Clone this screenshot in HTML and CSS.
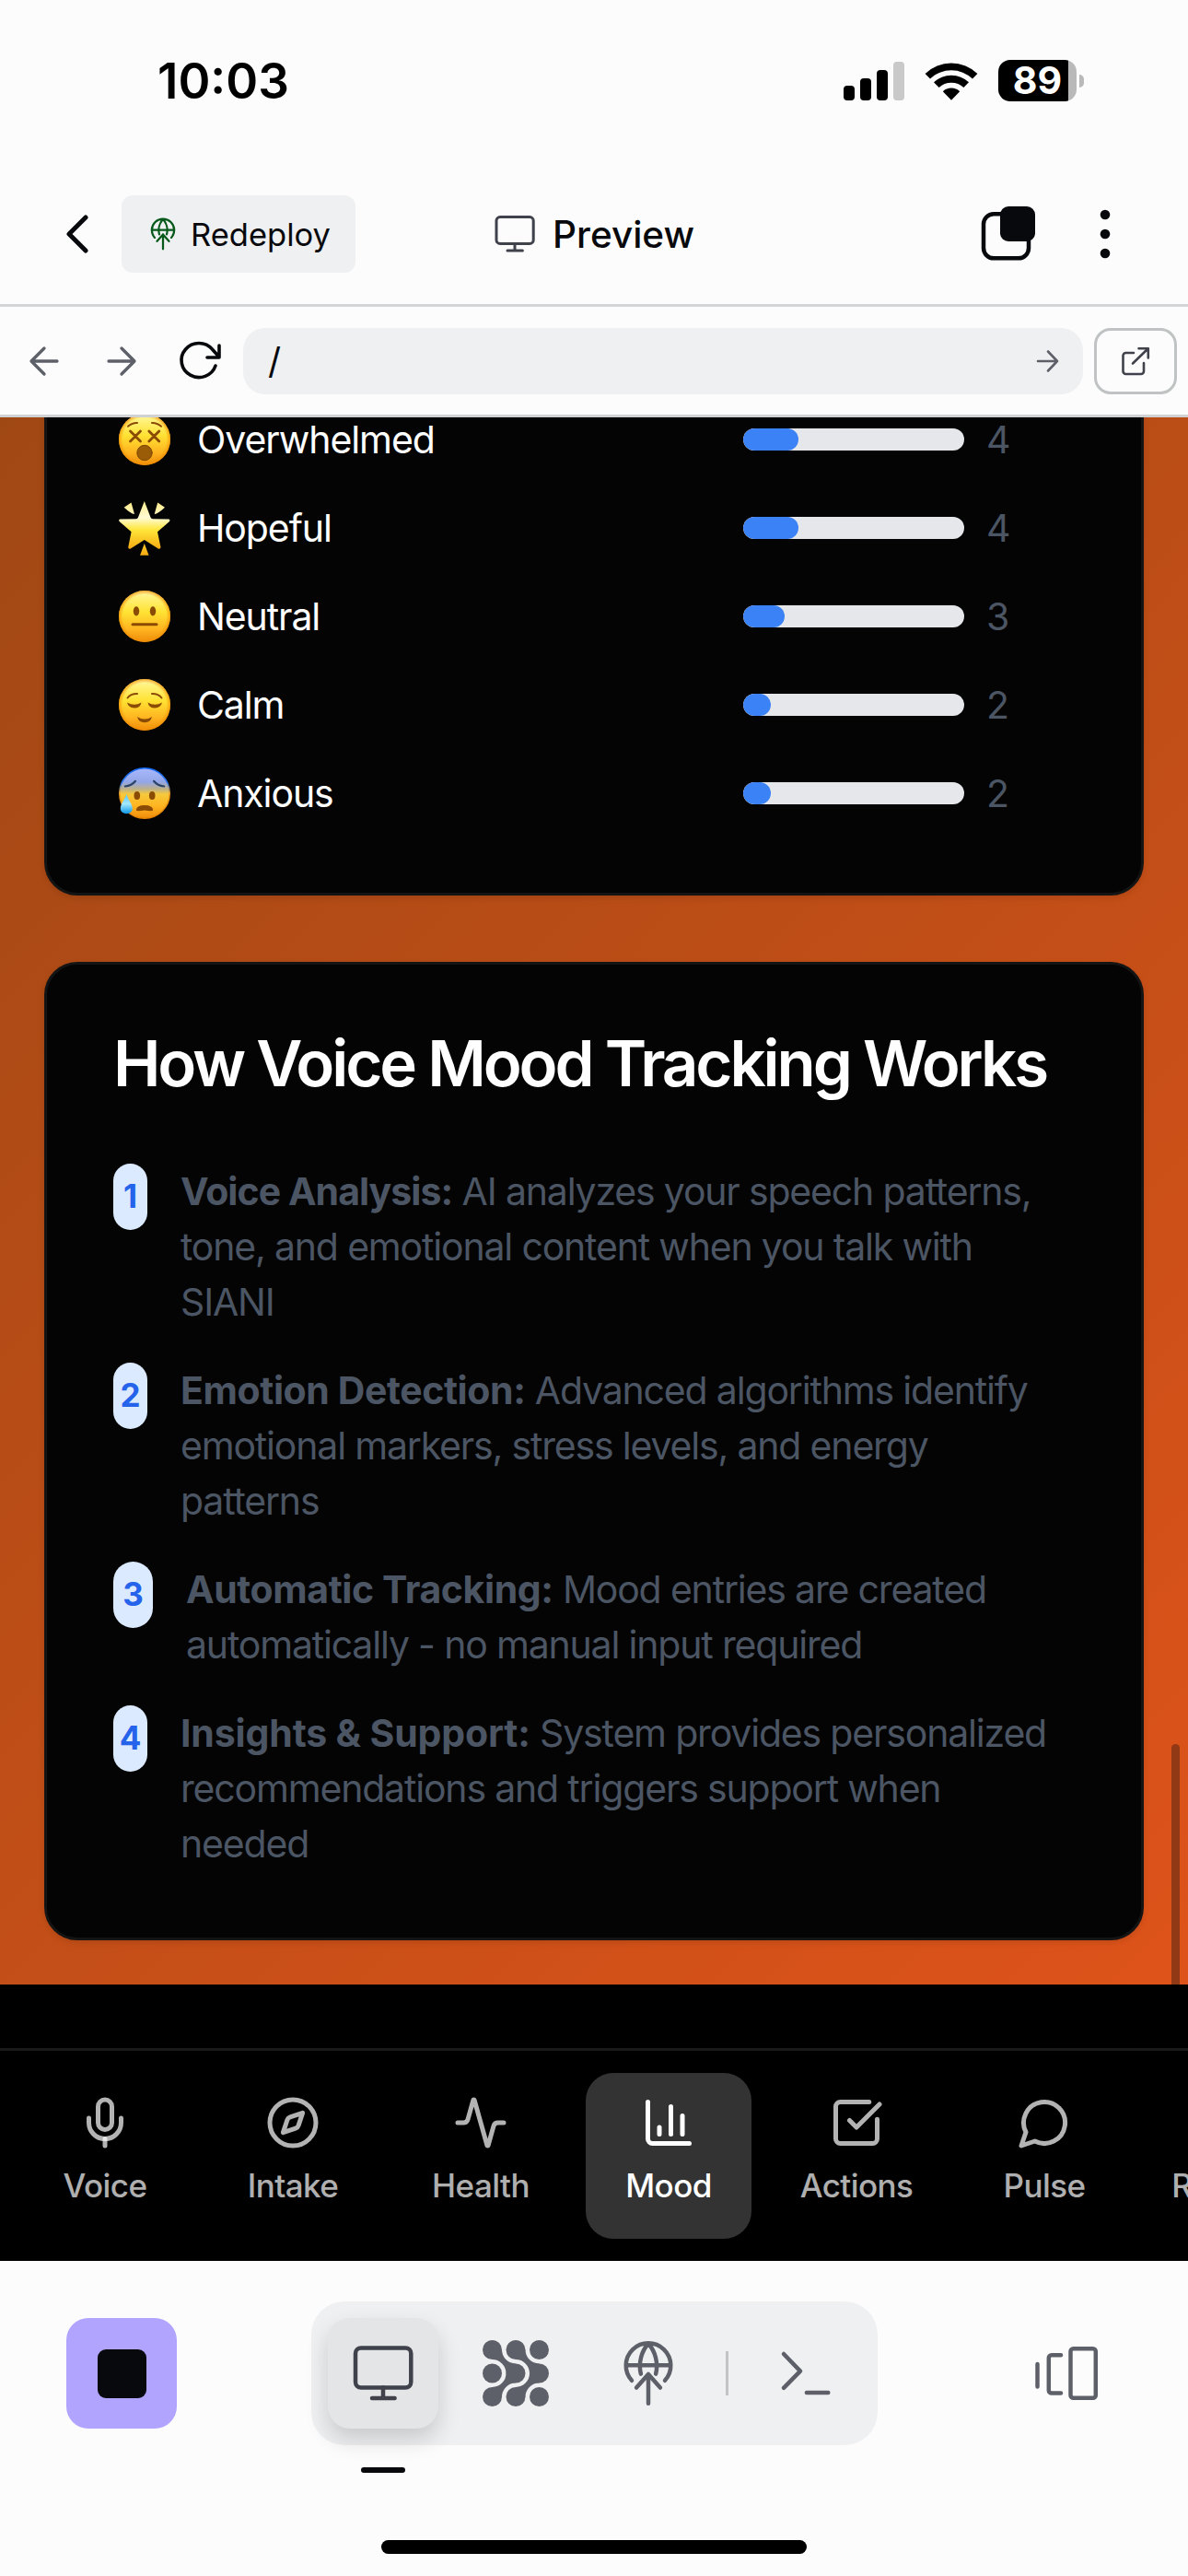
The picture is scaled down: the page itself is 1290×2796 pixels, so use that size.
FILE: index.html
```
<!DOCTYPE html>
<html lang="en">
<head>
<meta charset="utf-8">
<title>Preview</title>
<link rel="stylesheet" href="styles.css">
</head>
<body>
<svg class="defs" width="0" height="0">
  <defs>
    <linearGradient id="face" x1="0" y1="0" x2="0" y2="1">
      <stop offset="0" stop-color="#fff9b0"/><stop offset=".14" stop-color="#fff17a"/><stop offset=".42" stop-color="#ffe233"/><stop offset=".75" stop-color="#ffb420"/><stop offset="1" stop-color="#ee8d0c"/>
    </linearGradient>
    <radialGradient id="rim" cx=".5" cy=".5" r=".5">
      <stop offset=".84" stop-color="#f79a08" stop-opacity="0"/><stop offset="1" stop-color="#f08a00" stop-opacity=".75"/>
    </radialGradient>
    <linearGradient id="cold" x1="0" y1="0" x2="0" y2="1">
      <stop offset="0" stop-color="#a9b8ff"/><stop offset=".28" stop-color="#93a6e6"/><stop offset=".42" stop-color="#c0b284"/><stop offset=".52" stop-color="#f6c93c"/><stop offset=".75" stop-color="#ffb420"/><stop offset="1" stop-color="#ee8d0c"/>
    </linearGradient>
    <linearGradient id="coldrim" x1="0" y1="0" x2="0" y2="1">
      <stop offset="0" stop-color="#1268f5"/><stop offset=".3" stop-color="#2f78e8"/><stop offset=".5" stop-color="#f2a020"/><stop offset="1" stop-color="#e58200"/>
    </linearGradient>
    <linearGradient id="star" x1="0" y1="0" x2="0" y2="1">
      <stop offset="0" stop-color="#ffec8c"/><stop offset=".35" stop-color="#fffbd5"/><stop offset=".6" stop-color="#ffe63a"/><stop offset="1" stop-color="#f5a912"/>
    </linearGradient>
    <linearGradient id="drop" x1="0" y1="0" x2="0" y2="1">
      <stop offset="0" stop-color="#4fc4f5"/><stop offset=".5" stop-color="#a4e8fd"/><stop offset="1" stop-color="#0c97e8"/>
    </linearGradient>
    <symbol id="monitor" viewBox="0 0 24 24">
      <rect x="2" y="2.8" width="20.1" height="14.4" rx="2"/><path d="M12 17.2v3.8M8 21h8.2"/>
    </symbol>
    <symbol id="deploy" viewBox="0 0 24 24">
      <path d="M6 14.6A8.1 8.1 0 1 1 18 14.6M4 9.05h16M9.3 12.2C8.3 8.4 9.5 4 12 1.3C14.5 4 15.7 8.4 14.7 12.2"/>
      <path d="M12 22.9V12.300M7.700 17.2L12 12.300L16.300 17.2"/>
    </symbol>
  </defs>
</svg>

<header class="status">
  <span class="time">10:03</span>
  <div class="status-icons">
    <svg class="signal" viewBox="0 0 66 42"><rect y="26" width="12" height="16" rx="4"/><rect x="18" y="18" width="12" height="24" rx="4"/><rect x="36" y="9" width="12" height="33" rx="4"/><rect class="dim" x="54" width="12" height="42" rx="4"/></svg>
    <svg class="wifi" viewBox="0 0 58 42"><path d="M0.6 12.9A41 41 0 0 1 57.4 12.9L52 18.6A33 33 0 0 0 6 18.6ZM10 22.3A27.6 27.6 0 0 1 48 22.3L42.4 28.1A19.6 19.6 0 0 0 15.6 28.1ZM19.8 32.3A13.2 13.2 0 0 1 38.2 32.3L29 41.8Z"/></svg>
    <span class="battery">89</span>
    <span class="battery-tip"></span>
  </div>
</header>

<div class="titlebar">
  <svg class="back" viewBox="0 0 24 42"><path d="M21 3L3 21L21 39"/></svg>
  <button class="redeploy"><svg viewBox="0 0 24 24"><use href="#deploy"/></svg>Redeploy</button>
  <div class="title"><svg viewBox="0 0 24 24"><use href="#monitor"/></svg>Preview</div>
  <svg class="tabs" viewBox="0 0 60 60"><rect class="outline" x="3" y="8.3" width="49" height="48" rx="11"/><rect x="21" width="38" height="38" rx="9"/></svg>
  <svg class="more" viewBox="0 0 12 54"><circle cx="6" cy="6" r="5.3"/><circle cx="6" cy="27" r="5.3"/><circle cx="6" cy="48" r="5.3"/></svg>
</div>

<div class="urlbar">
  <svg class="nav-arrow" viewBox="0 0 34 34"><path d="M31 17H3M17 3L3 17L17 31"/></svg>
  <svg class="nav-arrow forward" viewBox="0 0 34 34"><path d="M3 17H31M17 3L31 17L17 31"/></svg>
  <svg class="reload" viewBox="0 0 48 44"><path d="M39 27A19 18.5 0 1 1 35.6 9.2L42.6 17M30 18H43V5"/></svg>
  <div class="address"><span>/</span><svg viewBox="0 0 26 26"><path d="M2 13H23M13 2.5L23 13L13 23.5"/></svg></div>
  <button class="open"><svg viewBox="0 0 32 32"><path d="M14 7H5.500a3 3 0 0 0-3 3V27a3 3 0 0 0 3 3H22a3 3 0 0 0 3-3V18M19.500 2.200H29.800V12.500M29.500 2.500L13 18.500"/></svg></button>
</div>

<main class="viewport">
  <section class="card moods">
    <div class="mood">
      <svg class="emoji" viewBox="0 0 56 56"><circle class="face" cx="28" cy="28" r="28"/><circle class="rim" cx="28" cy="28" r="28"/><g class="ink"><path d="M10 13.800Q14.500 9.800 20 10M36 10Q41.500 9.800 46 13.800"/><path class="thick" d="M12.500 19L23.500 30M23.500 19L12.500 30M32.800 19L43.800 30M43.800 19L32.800 30"/></g><circle class="mouth" cx="28" cy="42.500" r="8.200"/></svg>
      <span class="name">Overwhelmed</span><div class="bar"><div class="fill" style="width:25%"></div></div><span class="count">4</span>
    </div>
    <div class="mood">
      <svg class="emoji" viewBox="0 0 56 56"><g class="star"><path d="M27.800 -1L34.500 16.500Q35 18.200 37 18.300L54.500 18.500Q56.300 19.200 55 21L42 32.200L45.500 49Q45 51.500 42.800 50.500L27.800 41L12.800 50.500Q10.500 51.500 10.200 49L13.600 32.200L0.600 21Q-.7 19.200 1.100 18.500L18.600 18.300Q20.500 18.200 21 16.500Z"/><path d="M5.700 5.700L13.500.5L17 13Q13 12.500 5.700 5.700ZM50 5.700L42.200.5L38.700 13Q42.700 12.500 50 5.700ZM27.800 45L23 57.800H32.600Z"/></g></svg>
      <span class="name">Hopeful</span><div class="bar"><div class="fill" style="width:25%"></div></div><span class="count">4</span>
    </div>
    <div class="mood">
      <svg class="emoji" viewBox="0 0 56 56"><circle class="face" cx="28" cy="28" r="28"/><circle class="rim" cx="28" cy="28" r="28"/><ellipse class="eye" cx="19" cy="22.300" rx="3.200" ry="5.100"/><ellipse class="eye" cx="37" cy="22.300" rx="3.200" ry="5.100"/><path class="ink line" d="M15 36.800H41"/></svg>
      <span class="name">Neutral</span><div class="bar"><div class="fill" style="width:18.750%"></div></div><span class="count">3</span>
    </div>
    <div class="mood">
      <svg class="emoji" viewBox="0 0 56 56"><circle class="face" cx="28" cy="28" r="28"/><circle class="rim" cx="28" cy="28" r="28"/><path class="ink" d="M9.500 20.500Q13 15.800 20 16M36 16Q43 15.800 46.500 20.500"/><path class="eye" d="M9 25.500Q17 30 24.500 25.500Q23.500 31.500 16.800 31.500Q10.300 31 9 25.500ZM31.500 25.500Q39 30 47 25.500Q45.700 31 39.200 31.500Q32.500 31.500 31.500 25.500ZM20 41Q28 46 36 41Q34.500 47.200 28 47.200Q21.500 47.200 20 41Z"/></svg>
      <span class="name">Calm</span><div class="bar"><div class="fill" style="width:12.500%"></div></div><span class="count">2</span>
    </div>
    <div class="mood">
      <svg class="emoji" viewBox="0 0 56 56"><circle class="cold" cx="28" cy="28" r="27.200"/><path class="brow" d="M6.800 20.500Q14 19.800 18 14.800M38 14.800Q42 19.800 49.200 20.500"/><ellipse class="eye" cx="19.800" cy="30.500" rx="3.300" ry="4.500"/><ellipse class="eye" cx="36.200" cy="30.500" rx="3.300" ry="4.500"/><path class="eye" d="M18.800 46.500Q19 41 28 41Q37 41 37.200 46.500Q36.500 47.800 28 46.600Q19.500 47.800 18.800 46.500Z"/><path class="drop" d="M8.300 28.800C9.500 34.500 14.800 39 14.800 44.500C14.800 52 1.800 52 1.800 44.500C1.800 39 7.200 34.500 8.300 28.800Z"/></svg>
      <span class="name">Anxious</span><div class="bar"><div class="fill" style="width:12.500%"></div></div><span class="count">2</span>
    </div>
  </section>

  <section class="card">
    <h2>How Voice Mood Tracking Works</h2>
    <ol class="steps">
      <li><span class="num">1</span><p><strong>Voice Analysis:</strong> AI analyzes your speech patterns,<br>tone, and emotional content when you talk with<br>SIANI</p></li>
      <li><span class="num">2</span><p><strong class="loose">Emotion Detection:</strong> Advanced algorithms identify<br>emotional markers, stress levels, and energy<br>patterns</p></li>
      <li><span class="num wide">3</span><p><strong class="loose">Automatic Tracking:</strong> Mood entries are created<br>automatically - no manual input required</p></li>
      <li><span class="num">4</span><p><strong class="looser">Insights &amp; Support:</strong> System provides personalized<br>recommendations and triggers support when<br>needed</p></li>
    </ol>
  </section>
  <div class="scroll-thumb"></div>
</main>

<div class="app-dock">
  <nav class="app-nav">
    <a><svg viewBox="0 0 24 24"><path d="M12 2a3 3 0 0 0-3 3v7a3 3 0 0 0 6 0V5a3 3 0 0 0-3-3Z"/><path d="M19 10v2a7 7 0 0 1-14 0v-2"/><path d="M12 19v3"/></svg>Voice</a>
    <a><svg viewBox="0 0 24 24"><circle cx="12" cy="12" r="10"/><path d="m16.240 7.760-1.804 5.411a2 2 0 0 1-1.265 1.265L7.760 16.240l1.804-5.411a2 2 0 0 1 1.265-1.265z"/></svg>Intake</a>
    <a><svg viewBox="0 0 24 24"><path d="M22 12h-2.480a2 2 0 0 0-1.930 1.460l-2.350 8.360a.25.25 0 0 1-.48 0L9.240 2.180a.25.25 0 0 0-.48 0l-2.350 8.360A2 2 0 0 1 4.490 12H2"/></svg>Health</a>
    <a class="active"><svg viewBox="0 0 24 24"><path d="M3 3v16a2 2 0 0 0 2 2h16M18 17V9M13 17V5M8 17v-3"/></svg>Mood</a>
    <a><svg viewBox="0 0 24 24"><path d="M21 10.500V19a2 2 0 0 1-2 2H5a2 2 0 0 1-2-2V5a2 2 0 0 1 2-2h12.500M9 11l3 3L22 4"/></svg>Actions</a>
    <a><svg viewBox="0 0 24 24"><path d="M7.900 20A9 9 0 1 0 4 16.100L2 22Z"/></svg>Pulse</a>
    <a>Reports</a>
  </nav>
</div>

<footer class="toolbar">
  <button class="stop"><span></span></button>
  <div class="tools">
    <button class="tool selected"><svg viewBox="0 0 24 24"><use href="#monitor"/></svg></button>
    <button class="tool"><svg class="solid" viewBox="0 0 72 72"><circle cx="10.500" cy="10.500" r="10.500"/><circle cx="36" cy="10.500" r="10.500"/><circle cx="61.500" cy="10.500" r="10.500"/><circle cx="10.500" cy="36" r="10.500"/><circle cx="36" cy="36" r="10.500"/><circle cx="61.500" cy="36" r="10.500"/><circle cx="10.500" cy="61.500" r="10.500"/><circle cx="36" cy="61.500" r="10.500"/><circle cx="61.500" cy="61.500" r="10.500"/><path d="M21 10.500A15 15 0 0 0 36 25.500L25.500 36A15 15 0 0 0 10.500 21ZM46.500 10.500A15 15 0 0 0 61.500 25.500L51 36A15 15 0 0 0 36 21ZM21 61.500A15 15 0 0 1 36 46.500L25.500 36A15 15 0 0 1 10.500 51ZM46.500 61.500A15 15 0 0 1 61.500 46.500L51 36A15 15 0 0 1 36 51Z"/></svg></button>
    <button class="tool"><svg viewBox="0 0 24 24"><use href="#deploy"/></svg></button>
    <span class="divider"></span>
    <button class="tool"><svg viewBox="0 0 24 24"><path d="M4 5L10 11.200L4 17.300M12.300 19h7.800"/></svg></button>
  </div>
  <svg class="panels" viewBox="0 0 24 24"><path d="M1.500 8.700V16.800M10 5.400H6.600a1 1 0 0 0-1 1V18.200a1 1 0 0 0 1 1H10"/><rect x="13.500" y="3.100" width="9.100" height="17.800" rx="1"/></svg>
</footer>
<div class="home-bar"></div>
</body>
</html>
```
FILE: styles.css
```
* { box-sizing: border-box; margin: 0; padding: 0; }
body {
  width: 1290px;
  height: 2796px;
  overflow: hidden;
  background: #fcfcfc;
  color: #07090c;
  font-family: Inter, "Liberation Sans", sans-serif;
}
button { border: 0; background: none; font: inherit; color: inherit; }
svg { display: block; flex: none; fill: none; stroke: currentColor; stroke-linecap: round; stroke-linejoin: round; overflow: visible; }
.defs { position: absolute; }

/* phone status bar */
.status { height: 178px; padding: 0 113px 3px 171px; display: flex; justify-content: space-between; align-items: center; color: #000; }
.time { font-size: 53px; font-weight: 600; }
.status-icons { display: flex; align-items: center; }
.status-icons svg { fill: #000; stroke: none; height: 42px; }
.signal { width: 66px; margin-right: 22px; }
.signal .dim { fill: #c9c9c9; }
.wifi { width: 58px; margin-right: 22px; }
.battery {
  width: 85px; height: 45px; border-radius: 13px;
  background: linear-gradient(90deg, #000 76px, #b9b9b9 76px);
  color: #fff; font-size: 41px; font-weight: 700; line-height: 45px; text-align: center;
}
.battery-tip { width: 5px; height: 14px; margin-left: 3px; border-radius: 0 5px 5px 0; background: #b9b9b9; }

/* title bar */
.titlebar { height: 155px; border-bottom: 3px solid #d3d5d7; display: flex; align-items: center; padding-left: 72px; }
.back { width: 24px; height: 42px; stroke-width: 5; }
.redeploy {
  width: 254px; height: 84px; margin-left: 36px; padding-left: 27px; border-radius: 12px;
  background: #eff0f2; display: flex; align-items: center; gap: 12px; font-size: 34.5px;
}
.redeploy svg { width: 36px; height: 36px; stroke: #07591a; stroke-width: 1.5; }
.title { width: 231px; margin-left: 149px; display: flex; align-items: center; gap: 17px; font-size: 40.5px; font-weight: 500; }
.title svg { width: 48px; height: 48px; stroke: #3f424b; stroke-width: 1.5; }
.tabs { width: 60px; height: 60px; margin-left: 299px; fill: #07090c; stroke: none; }
.tabs .outline { fill: none; stroke: #07090c; stroke-width: 4.5; }
.more { width: 12px; height: 54px; margin-left: 69px; fill: #07090c; stroke: none; }

/* address row */
.urlbar { height: 120px; border-bottom: 3px solid #d0d1d3; display: flex; align-items: center; padding-left: 31px; }
.nav-arrow { width: 34px; height: 34px; stroke: #5d6068; stroke-width: 3.3; }
.forward { margin-left: 50px; }
.reload { width: 48px; height: 44px; margin-left: 46px; stroke-width: 3.6; }
.address {
  width: 912px; height: 72px; margin-left: 21px; padding: 0 25px 0 27px; border-radius: 24px;
  background: #eff0f2; display: flex; align-items: center; justify-content: space-between; font-size: 39px;
}
.address svg { width: 26px; height: 26px; stroke: #5d6068; stroke-width: 2.6; }
.open { width: 90px; height: 72px; margin-left: 12px; border: 3px solid #bfc3c3; border-radius: 18px; display: flex; align-items: center; justify-content: center; }
.open svg { width: 32px; height: 32px; stroke: #3f424b; stroke-width: 2.6; }

/* previewed page */
.viewport {
  position: relative; height: 1701px; padding: 0 48px 48px; overflow: hidden;
  display: flex; flex-direction: column; justify-content: flex-end; gap: 72px;
  background: linear-gradient(135deg, #a04814, #de531a);
}
.card {
  flex: none; padding: 72px; border: 3px solid #141414; border-radius: 36px;
  background: #040404; color: #fff; box-shadow: 0 3px 6px rgba(0, 0, 0, .1);
}
.moods { display: flex; flex-direction: column; gap: 24px; }
.mood { height: 72px; display: flex; align-items: center; font-size: 41px; }
.emoji { width: 56px; height: 56px; margin: 0 29px 0 6px; stroke: none; }
.name { flex: 1; letter-spacing: -1.1px; }
.face { fill: url(#face); }
.rim { fill: url(#rim); }
.cold { fill: url(#cold); stroke: url(#coldrim); stroke-width: 1.6; }
.star { fill: url(#star); }
.drop { fill: url(#drop); }
.mouth { fill: #9a5c06; stroke: #7a4503; stroke-width: 1; }
.eye { fill: #8a4b05; }
.ink { fill: none; stroke: #8a4b05; stroke-width: 2; }
.ink .thick { stroke-width: 2.8; }
.ink.line { stroke-width: 3; }
.brow { stroke: #2c4468; stroke-width: 2.2; }
.bar { width: 240px; height: 24px; border-radius: 12px; overflow: hidden; background: #e5e7eb; }
.fill { height: 24px; border-radius: 12px; background: #3b82f6; }
.count { width: 96px; margin-left: 24px; color: #4b5563; }

h2 { line-height: 70px; margin-bottom: 74px; font-size: 69px; font-weight: 600; letter-spacing: -3.12px; white-space: nowrap; }
.steps { list-style: none; display: flex; flex-direction: column; gap: 36px; }
.steps li { display: flex; align-items: flex-start; gap: 36px; color: #4b5563; font-size: 41px; line-height: 60px; white-space: nowrap; }
.steps p { letter-spacing: -1.18px; }
.steps strong { font-weight: 700; letter-spacing: -.95px; }
.steps .loose { letter-spacing: -.4px; }
.steps .looser { letter-spacing: -.15px; }
.num { width: 37px; height: 72px; border-radius: 19px; background: #dbeafe; color: #2563eb; font-size: 35px; font-weight: 700; line-height: 71px; text-align: center; }
.num.wide { width: 43px; border-radius: 22px; }
.scroll-thumb { position: absolute; right: 9px; top: 1440px; bottom: 0; width: 9px; border-radius: 5px 5px 0 0; background: #903914; }

/* navigation of the previewed app */
.app-dock { height: 300px; padding-top: 69px; background: #000; overflow: hidden; }
.app-nav { height: 231px; border-top: 3px solid #1a1a1a; padding: 24px; display: flex; gap: 24px; }
.app-nav a {
  flex: none; width: 180px; height: 180px; padding-top: 24px; border-radius: 30px;
  display: flex; flex-direction: column; align-items: center; justify-content: space-between; padding-bottom: 34px;
  color: rgba(255, 255, 255, .7); font-size: 35px; font-weight: 500; line-height: 48px; letter-spacing: -.55px;
}
.app-nav a:last-child { justify-content: flex-end; letter-spacing: .2px; }
.app-nav a.active { background: #333; color: #fff; }
.app-nav svg { width: 60px; height: 60px; stroke-width: 2; }

/* bottom toolbar */
.toolbar { height: 303px; padding: 44px 96px 0 72px; display: flex; align-items: flex-start; }
.stop { width: 120px; height: 120px; margin-top: 18px; border-radius: 24px; background: #b1a4ff; display: flex; align-items: center; justify-content: center; }
.stop span { width: 53px; height: 53px; border-radius: 9px; background: #07090c; }
.tools { width: 615px; height: 156px; margin-left: 146px; padding: 18px; border-radius: 36px; background: #eff0f2; display: flex; align-items: center; gap: 24px; color: #5d6068; }
.tool { position: relative; flex: none; width: 120px; height: 120px; border-radius: 24px; display: flex; align-items: center; justify-content: center; }
.tool svg { width: 72px; height: 72px; stroke-width: 1.5; }
.tool .solid { fill: #5d6068; stroke: none; }
.selected { background: #e4e5e6; color: #3f424b; box-shadow: 0 12px 24px rgba(0, 0, 0, .16); }
.selected::after { content: ""; position: absolute; left: 36px; top: 162px; width: 48px; height: 6px; border-radius: 3px; background: #07090c; }
.divider { width: 3px; height: 48px; background: #c2c4c7; }
.panels { width: 72px; height: 72px; margin: 42px 0 0 auto; stroke: #5d6068; stroke-width: 1.5; }
.home-bar { width: 462px; height: 15px; margin: 0 auto; border-radius: 8px; background: #000; }
```
